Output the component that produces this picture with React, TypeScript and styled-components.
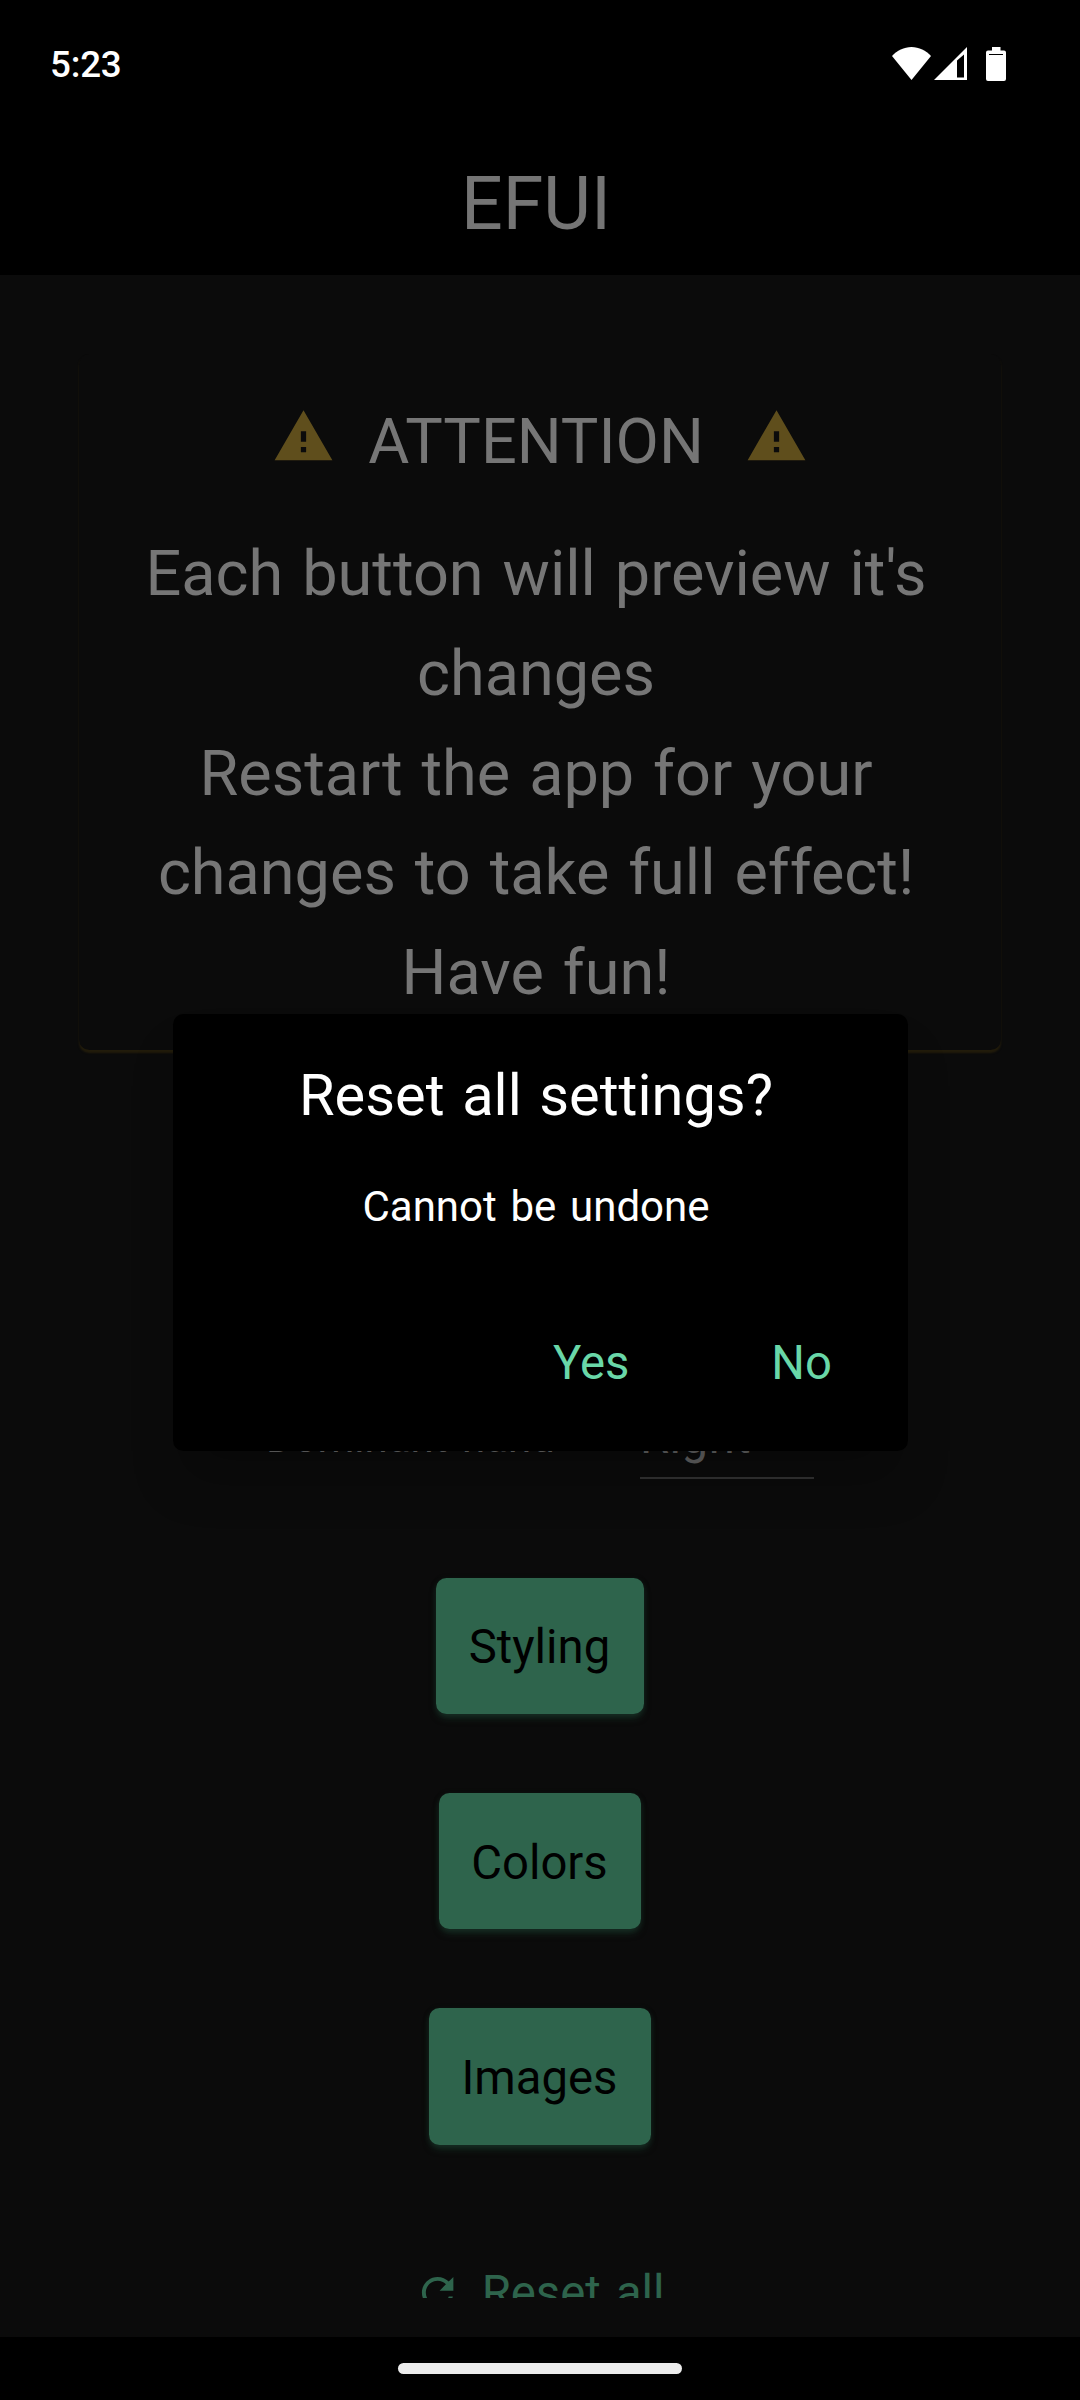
import React from "react";
import styled, { createGlobalStyle } from "styled-components";

const GlobalStyle = createGlobalStyle`
  * { box-sizing: border-box; }
  html, body { margin: 0; background: #000; }
  body { font-family: Roboto, "Noto Sans", sans-serif; }
  button { font: inherit; border: 0; background: none; padding: 0; }
`;

const Screen = styled.div`
  position: relative;
  width: 1080px;
  height: 2400px;
  display: flex;
  flex-direction: column;
  background: #0b0b0b;
  overflow: hidden;
`;

const StatusBar = styled.div`
  flex: none;
  height: 128px;
  padding: 0 74px 0 50px;
  display: flex;
  justify-content: space-between;
  background: #000;
  color: #fff;
`;

const Clock = styled.span`
  font-size: 36.75px;
  font-weight: 500;
  line-height: 43px;
  margin-top: 43px;
  letter-spacing: -0.2px;
`;

const StatusIcons = styled.div`
  display: flex;
  padding-top: 47px;
  svg { display: block; }
`;

const Header = styled.header`
  flex: none;
  height: 147px;
  padding: 26px 8px 0 0;
  background: #000;
  text-align: center;
`;

const Title = styled.h1`
  margin: 0;
  font-size: 73.5px;
  font-weight: 400;
  line-height: 100px;
  color: #757575;
`;

const Content = styled.main`
  flex: none;
  height: 2023px;
  overflow: hidden;
  padding-top: 79px;
  display: flex;
  flex-direction: column;
  align-items: center;
`;

const Card = styled.section`
  flex: none;
  width: 922.5px;
  height: 696px;
  padding: 38px 40px 0;
  border-radius: 10.5px;
  background: #0b0b0b;
  box-shadow: 0 2.5px 2px 0 #221c0b;
  color: #767676;
  font-size: 63px;
  line-height: 99.75px;
`;

const CardHeading = styled.div`
  display: flex;
  justify-content: center;
  margin-bottom: 32.25px;
`;

const Heading = styled.h2`
  margin: 0 41px 0 33px;
  font: inherit;
`;

const WarningIcon = styled.svg`
  width: 63px;
  height: 63px;
  margin-top: 13px;
  fill: #5f4e1c;
`;

const Message = styled.p`
  margin: 0;
  padding-right: 8px;
  text-align: center;
  word-spacing: 3.3px;
`;

const SettingRow = styled.div`
  flex: none;
  margin-top: 350px;
  height: 80px;
  width: 548px;
  display: flex;
  justify-content: space-between;
`;

const SettingLabel = styled.span`
  padding-top: 12.5px;
  font-size: 42px;
  line-height: 50px;
  word-spacing: 4px;
  color: #6b6b6b;
`;

const Select = styled.div`
  width: 174px;
  height: 79px;
  padding-top: 7px;
  border-bottom: 2px solid #333;
  font-size: 47.25px;
  line-height: 60px;
  letter-spacing: 0.5px;
  color: #626262;
`;

const ButtonStack = styled.div`
  flex: none;
  margin-top: 97.5px;
  display: flex;
  flex-direction: column;
  align-items: center;
  gap: 78.75px;
`;

const FilledButton = styled.button`
  height: 136.5px;
  padding: 3px 33.5px 0 32.5px;
  border-radius: 10.5px;
  background: #2e644c;
  box-shadow: 0 5px 7px -1px rgba(32, 74, 56, 0.5), 0 1px 6px rgba(32, 74, 56, 0.2);
  font-size: 47.25px;
  color: #000;
`;

const TextButton = styled.button`
  display: flex;
  align-items: center;
  gap: 20px;
  margin-top: 38.5px;
  padding-right: 1px;
  font-size: 47.25px;
  line-height: 60px;
  word-spacing: 3.5px;
  color: #2e644c;
  svg { width: 47.25px; height: 47.25px; fill: currentColor; }
`;

const TextButtonLabel = styled.span`
  padding-top: 1px;
`;

const NavigationBar = styled.div`
  position: absolute;
  inset: auto 0 0;
  height: 63px;
  padding-top: 26px;
  display: flex;
  justify-content: center;
  background: #000;
`;

const HomeHandle = styled.div`
  width: 284px;
  height: 11px;
  border-radius: 6px;
  background: #ececec;
`;

const Dialog = styled.div`
  position: absolute;
  left: 173px;
  top: 1014px;
  width: 735px;
  height: 437px;
  border-radius: 10.5px;
  background: #000;
  box-shadow: 0 36px 50px -8px rgba(0, 0, 0, 0.24);
  display: flex;
  flex-direction: column;
`;

const DialogTitle = styled.h2`
  margin: 46px 9px 0 0;
  font-size: 57.75px;
  font-weight: 400;
  line-height: 70px;
  text-align: center;
  word-spacing: 3.3px;
  color: #fff;
`;

const DialogText = styled.p`
  margin: 52px 9px 0 0;
  font-size: 42px;
  line-height: 50px;
  text-align: center;
  word-spacing: 3.3px;
  color: #fff;
`;

const DialogActions = styled.div`
  margin-top: 101px;
  padding-right: 76px;
  display: flex;
  justify-content: flex-end;
  gap: 142px;
`;

const DialogButton = styled.button`
  font-size: 47.25px;
  line-height: 60px;
  color: #69d7a8;
`;

const Warning = () => (
  <WarningIcon viewBox="0 0 24 24">
    <path d="M1 21h22L12 2 1 21zm12-3h-2v-2h2v2zm0-4h-2v-4h2v4z" />
  </WarningIcon>
);

const pages = ["Styling", "Colors", "Images"];

export default function App() {
  return (
    <>
      <GlobalStyle />
      <Screen>
        <StatusBar>
          <Clock>5:23</Clock>
          <StatusIcons>
            <svg width="114" height="34" viewBox="0 0 114 34" fill="#fff">
              <path d="M0 9C5 3.500 12 0 19.500 0S34 3.500 39 9L19.500 33z" />
              <path fillRule="evenodd" d="M42 33L75 0V33zM65 13.500V30.500H72V7.500z" />
              <path
                fillRule="evenodd"
                d="M100 0h8.500v3.500H112a2 2 0 0 1 2 2V32a2 2 0 0 1-2 2H96a2 2 0 0 1-2-2V5.500a2 2 0 0 1 2-2h4zM97 7v1h14V7z"
              />
            </svg>
          </StatusIcons>
        </StatusBar>
        <Header>
          <Title>EFUI</Title>
        </Header>
        <Content>
          <Card>
            <CardHeading>
              <Warning />
              <Heading>ATTENTION</Heading>
              <Warning />
            </CardHeading>
            <Message>
              Each button will preview it's
              <br />
              changes
              <br />
              Restart the app for your
              <br />
              changes to take full effect!
              <br />
              Have fun!
            </Message>
          </Card>
          <SettingRow>
            <SettingLabel>Dominant hand</SettingLabel>
            <Select>Right</Select>
          </SettingRow>
          <ButtonStack>
            {pages.map((page) => (
              <FilledButton key={page}>{page}</FilledButton>
            ))}
            <TextButton>
              <svg viewBox="0 0 24 24">
                <path d="M17.650 6.350C16.200 4.900 14.210 4 12 4c-4.420 0-7.990 3.580-7.990 8s3.570 8 7.990 8c3.730 0 6.840-2.550 7.730-6h-2.080c-.82 2.330-3.040 4-5.650 4-3.310 0-6-2.690-6-6s2.690-6 6-6c1.660 0 3.140.69 4.220 1.780L13 11h7V4l-2.350 2.350z" />
              </svg>
              <TextButtonLabel>Reset all</TextButtonLabel>
            </TextButton>
          </ButtonStack>
        </Content>
        <NavigationBar>
          <HomeHandle />
        </NavigationBar>
        <Dialog role="dialog">
          <DialogTitle>Reset all settings?</DialogTitle>
          <DialogText>Cannot be undone</DialogText>
          <DialogActions>
            <DialogButton>Yes</DialogButton>
            <DialogButton>No</DialogButton>
          </DialogActions>
        </Dialog>
      </Screen>
    </>
  );
}
